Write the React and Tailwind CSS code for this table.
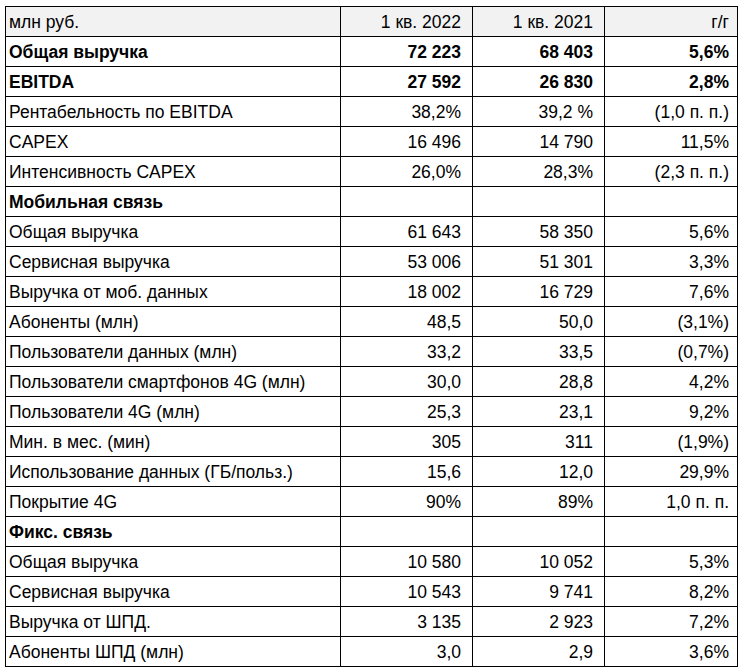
const rows = [
  { label: "Общая выручка", a: "72 223", b: "68 403", c: "5,6%", bold: true },
  { label: "EBITDA", a: "27 592", b: "26 830", c: "2,8%", bold: true },
  { label: "Рентабельность по EBITDA", a: "38,2%", b: "39,2 %", c: "(1,0 п. п.)" },
  { label: "CAPEX", a: "16 496", b: "14 790", c: "11,5%" },
  { label: "Интенсивность CAPEX", a: "26,0%", b: "28,3%", c: "(2,3 п. п.)" },
  { label: "Мобильная связь", section: true },
  { label: "Общая выручка", a: "61 643", b: "58 350", c: "5,6%" },
  { label: "Сервисная выручка", a: "53 006", b: "51 301", c: "3,3%" },
  { label: "Выручка от моб. данных", a: "18 002", b: "16 729", c: "7,6%" },
  { label: "Абоненты (млн)", a: "48,5", b: "50,0", c: "(3,1%)" },
  { label: "Пользователи данных (млн)", a: "33,2", b: "33,5", c: "(0,7%)" },
  { label: "Пользователи смартфонов 4G (млн)", a: "30,0", b: "28,8", c: "4,2%" },
  { label: "Пользователи 4G (млн)", a: "25,3", b: "23,1", c: "9,2%" },
  { label: "Мин. в мес. (мин)", a: "305", b: "311", c: "(1,9%)" },
  { label: "Использование данных (ГБ/польз.)", a: "15,6", b: "12,0", c: "29,9%" },
  { label: "Покрытие 4G", a: "90%", b: "89%", c: "1,0 п. п." },
  { label: "Фикс. связь", section: true },
  { label: "Общая выручка", a: "10 580", b: "10 052", c: "5,3%" },
  { label: "Сервисная выручка", a: "10 543", b: "9 741", c: "8,2%" },
  { label: "Выручка от ШПД.", a: "3 135", b: "2 923", c: "7,2%" },
  { label: "Абоненты ШПД (млн)", a: "3,0", b: "2,9", c: "3,6%" },
];

const cell = "h-[30px] border border-black p-0 pt-[2px] align-middle";

export default function App() {
  return (
    <div className="min-h-[671px] w-[742px] bg-white pl-[5px] pt-[6px] font-['Liberation_Sans',Arial,sans-serif] text-[17.5px] leading-none text-black">
      <table className="w-[732px] table-fixed border-collapse">
        <colgroup>
          <col className="w-[335px]" />
          <col className="w-[132px]" />
          <col className="w-[132px]" />
          <col className="w-[133px]" />
        </colgroup>
        <thead>
          <tr className="bg-[#f2f2f2]">
            <td className={`${cell} pl-[3px] text-left`}>млн руб.</td>
            <td className={`${cell} pr-[11px] text-right`}>1 кв. 2022</td>
            <td className={`${cell} pr-[11px] text-right`}>1 кв. 2021</td>
            <td className={`${cell} pr-[8px] text-right`}>г/г</td>
          </tr>
        </thead>
        <tbody>
          {rows.map((r, i) => (
            <tr key={i} className={r.bold || r.section ? "font-bold" : ""}>
              <td className={`${cell} pl-[3px] text-left`}>{r.label}</td>
              <td className={`${cell} pr-[11px] text-right`}>{r.a || ""}</td>
              <td className={`${cell} pr-[11px] text-right`}>{r.b || ""}</td>
              <td className={`${cell} pr-[8px] text-right`}>{r.c || ""}</td>
            </tr>
          ))}
        </tbody>
      </table>
    </div>
  );
}
